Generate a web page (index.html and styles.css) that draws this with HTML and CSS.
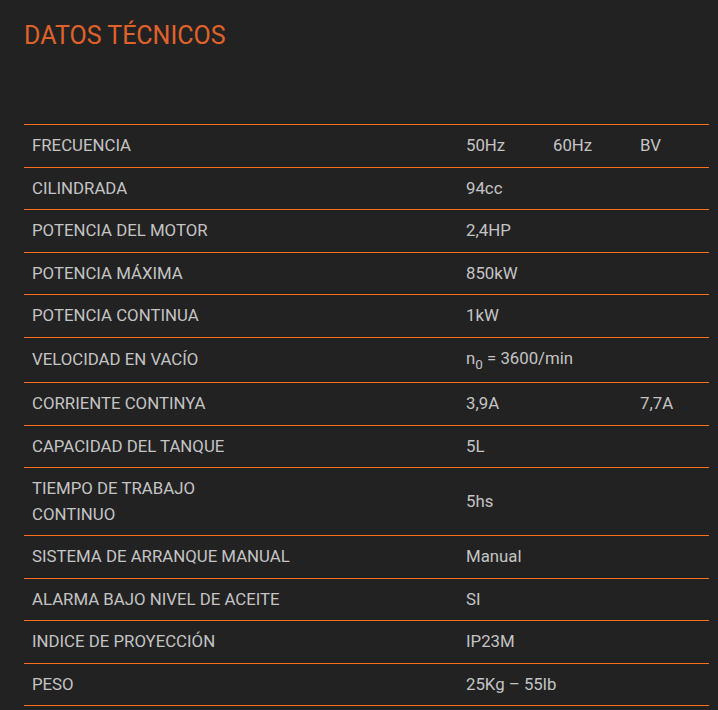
FILE: index.html
```html
<!DOCTYPE html>
<html lang="es">
<head>
<meta charset="utf-8">
<title>Datos técnicos</title>
<link rel="stylesheet" href="styles.css">
</head>
<body>
<section class="specs">
  <h2 class="specs-title">DATOS TÉCNICOS</h2>
  <table class="specs-table">
    <colgroup>
      <col class="col-label">
      <col class="col-v">
      <col class="col-v">
      <col class="col-last">
    </colgroup>
    <tbody>
      <tr><td>FRECUENCIA</td><td>50Hz</td><td>60Hz</td><td>BV</td></tr>
      <tr><td>CILINDRADA</td><td>94cc</td><td></td><td></td></tr>
      <tr><td>POTENCIA DEL MOTOR</td><td>2,4HP</td><td></td><td></td></tr>
      <tr><td>POTENCIA MÁXIMA</td><td>850kW</td><td></td><td></td></tr>
      <tr><td>POTENCIA CONTINUA</td><td>1kW</td><td></td><td></td></tr>
      <tr><td>VELOCIDAD EN VACÍO</td><td colspan="3">n<sub>0</sub> = 3600/min</td></tr>
      <tr><td>CORRIENTE CONTINYA</td><td>3,9A</td><td></td><td>7,7A</td></tr>
      <tr><td>CAPACIDAD DEL TANQUE</td><td>5L</td><td></td><td></td></tr>
      <tr><td>TIEMPO DE TRABAJO<br>CONTINUO</td><td>5hs</td><td></td><td></td></tr>
      <tr><td>SISTEMA DE ARRANQUE MANUAL</td><td>Manual</td><td></td><td></td></tr>
      <tr><td>ALARMA BAJO NIVEL DE ACEITE</td><td>SI</td><td></td><td></td></tr>
      <tr><td>INDICE DE PROYECCIÓN</td><td>IP23M</td><td></td><td></td></tr>
      <tr><td>PESO</td><td>25Kg – 55lb</td><td></td><td></td></tr>
    </tbody>
  </table>
</section>
</body>
</html>
```

FILE: styles.css
```css
html, body {
  margin: 0;
  background: #222222;
}
body {
  font-family: Roboto, "Liberation Sans", sans-serif;
  color: #c4c4c4;
}
.specs {
  padding: 20px 9px 0 24px;
}
.specs-title {
  margin: 0 0 72px;
  font-size: 25px;
  font-weight: 400;
  line-height: 32px;
  color: #e0622a;
}
.specs-table {
  width: 685px;
  border-collapse: collapse;
  table-layout: fixed;
  font-size: 16.8px;
  line-height: 25.5px;
}
.col-label { width: 434px; }
.col-v { width: 87px; }
.col-last { width: 77px; }
.specs-table td {
  padding: 8px;
  border-top: 1px solid #f5711a;
  border-bottom: 1px solid #f5711a;
  vertical-align: middle;
  white-space: nowrap;
}
.specs-table sub {
  font-size: 0.8em;
  line-height: 1.4;
  vertical-align: -0.35em;
}
```
